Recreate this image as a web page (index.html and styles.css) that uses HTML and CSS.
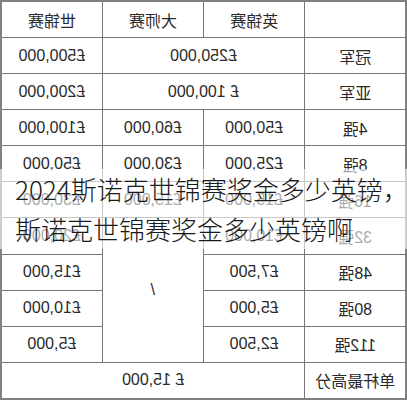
FILE: index.html
```html
<!DOCTYPE html>
<html lang="zh-CN">
<head>
<meta charset="utf-8">
<link rel="stylesheet" href="styles.css">
</head>
<body>
<div class="page">
  <table class="prize">
    <colgroup><col><col><col><col></colgroup>
    <tr><td></td><td>英锦赛</td><td>大师赛</td><td>世锦赛</td></tr>
    <tr><td>冠军</td><td colspan="2">£250,000</td><td>£500,000</td></tr>
    <tr><td>亚军</td><td colspan="2">£ 100,000</td><td>£200,000</td></tr>
    <tr><td>4强</td><td>£50,000</td><td>£60,000</td><td>£100,000</td></tr>
    <tr><td>8强</td><td>£25,000</td><td>£30,000</td><td>£50,000</td></tr>
    <tr><td>16强</td><td>£15,000</td><td>£15,000</td><td>£30,000</td></tr>
    <tr><td>32强</td><td>£10,000</td><td rowspan="4">/</td><td>£20,000</td></tr>
    <tr><td>48强</td><td>£7,500</td><td>£15,000</td></tr>
    <tr><td>80强</td><td>£5,000</td><td>£10,000</td></tr>
    <tr><td>112强</td><td>£2,500</td><td>£5,000</td></tr>
    <tr><td>单杆最高分</td><td colspan="3">£ 15,000</td></tr>
  </table>
  <div class="caption">
    <span class="line">2024斯诺克世锦赛奖金多少英镑，</span>
    <span class="line">斯诺克世锦赛奖金多少英镑啊</span>
  </div>
</div>
</body>
</html>
```

FILE: styles.css
```css
html, body {
  margin: 0;
  padding: 0;
  background: #fff;
}

.page {
  position: relative;
  width: 407px;
  height: 400px;
  overflow: hidden;
}

.prize {
  width: 407px;
  height: 400px;
  table-layout: fixed;
  border-collapse: collapse;
  border: 2px solid #808080;
  transform: scaleX(-1);
  font-family: "Liberation Sans", "Noto Sans CJK SC", sans-serif;
  font-size: 16px;
  color: #2a2a2a;
}

.prize td {
  border: 1px solid #767676;
  text-align: center;
  vertical-align: middle;
  padding: 0;
  height: 35px;
}

.caption {
  position: absolute;
  left: 0;
  top: 169px;
  width: 100%;
  padding-left: 15px;
  box-sizing: border-box;
  background: rgba(255, 255, 255, 0.6);
  font-family: "Noto Sans CJK SC", sans-serif;
  font-size: 26px;
  font-weight: 300;
  line-height: 40px;
  color: #1a1a1a;
}

.line {
  display: block;
  white-space: nowrap;
}
```
